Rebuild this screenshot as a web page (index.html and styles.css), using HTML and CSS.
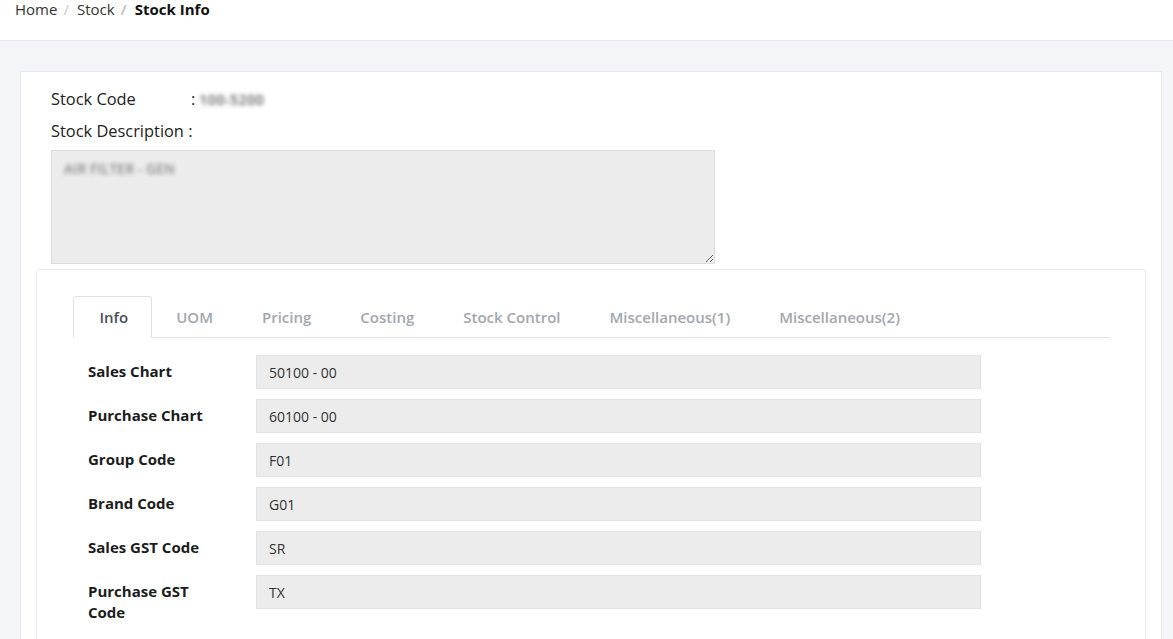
FILE: index.html
```html
<!DOCTYPE html>
<html lang="en">
<head>
    <meta charset="UTF-8">
    <meta name="viewport" content="width=device-width, initial-scale=1.0">
    <title>Stock Info</title>
    <link rel="stylesheet" href="styles.css">
</head>
<body>
<div class="top-bar">
    <ol class="breadcrumb">
        <li><a href="#">Home</a></li>
        <li><a href="#">Stock</a></li>
        <li class="active">Stock Info</li>
    </ol>
</div>

<div class="page">
    <div class="card">
        <div class="stock-head">
            <div class="head-row">
                <span class="head-label">Stock Code</span>
                <span class="head-colon">:</span>
                <span class="masked">100-5200</span>
            </div>
            <div class="head-row">
                <span>Stock Description :</span>
            </div>
            <textarea class="desc-box" readonly>AIR FILTER - GEN</textarea>
        </div>

        <div class="detail-panel">
            <ul class="tabs">
                <li class="tab active">Info</li>
                <li class="tab">UOM</li>
                <li class="tab">Pricing</li>
                <li class="tab">Costing</li>
                <li class="tab">Stock Control</li>
                <li class="tab">Miscellaneous(1)</li>
                <li class="tab">Miscellaneous(2)</li>
            </ul>

            <div class="info-form">
                <div class="form-row">
                    <label>Sales Chart</label>
                    <input type="text" value="50100 - 00" readonly>
                </div>
                <div class="form-row">
                    <label>Purchase Chart</label>
                    <input type="text" value="60100 - 00" readonly>
                </div>
                <div class="form-row">
                    <label>Group Code</label>
                    <input type="text" value="F01" readonly>
                </div>
                <div class="form-row">
                    <label>Brand Code</label>
                    <input type="text" value="G01" readonly>
                </div>
                <div class="form-row">
                    <label>Sales GST Code</label>
                    <input type="text" value="SR" readonly>
                </div>
                <div class="form-row">
                    <label>Purchase GST Code</label>
                    <input type="text" value="TX" readonly>
                </div>
            </div>
        </div>
    </div>
</div>
</body>
</html>
```

FILE: styles.css
```css
html, body {
    overflow: hidden;
}

body {
    font-family: "Open Sans", Arial, sans-serif;
    background-color: #f4f5f8;
    color: #212529;
    margin: 0;
    padding: 0;
}

/* Top bar */
.top-bar {
    background-color: #fff;
    height: 40px;
    border-bottom: 1px solid #e6e8ec;
}

.breadcrumb {
    list-style: none;
    margin: 0;
    padding: 0 15px;
    display: flex;
    font-size: 15px;
    line-height: 18px;
}

.breadcrumb li + li::before {
    content: "/";
    color: #c8c8c8;
    padding: 0 8px 0 6px;
}

.breadcrumb a {
    color: #333;
    text-decoration: none;
}

.breadcrumb .active {
    font-weight: bold;
    color: #111;
}

/* Page */
.page {
    padding: 30px 11px 0 20px;
}

.card {
    background: #fff;
    border: 1px solid #e6e8ec;
    padding: 15px 15px 0;
    min-height: 620px;
}

.stock-head {
    padding: 0 15px;
}

.head-row {
    display: flex;
    font-size: 16.4px;
    line-height: 24px;
    margin-bottom: 8px;
    color: #222;
}

.head-label {
    width: 140px;
}

.head-colon {
    width: 8px;
}

.masked {
    color: transparent;
    text-shadow: 0 0 4px #666;
    font-size: 15px;
    font-weight: 600;
}

.desc-box {
    display: block;
    width: 664px;
    height: 114px;
    box-sizing: border-box;
    margin: -1px 0 5px;
    padding: 8px 12px;
    background-color: #ececec;
    border: 1px solid #dcdcdc;
    border-radius: 0;
    font-family: "Open Sans", Arial, sans-serif;
    font-size: 14px;
    font-weight: 600;
    color: transparent;
    text-shadow: 0 0 4px #8a8a8a;
    outline: none;
}

/* Detail panel */
.detail-panel {
    border: 1px solid #e9ebee;
    border-radius: 3px;
    padding: 26px 35px 0 36px;
    min-height: 400px;
}

.tabs {
    list-style: none;
    margin: 0;
    padding: 0;
    display: flex;
    border-bottom: 1px solid #dee2e6;
}

.tab {
    padding: 10px 23.5px;
    font-size: 15px;
    line-height: 20px;
    font-weight: 600;
    color: #a2a6b0;
    border: 1px solid transparent;
    border-radius: 4px 4px 0 0;
    margin-bottom: -1px;
    cursor: pointer;
}

.tab:first-child {
    padding-left: 25.5px;
    padding-right: 22.5px;
}

.tab.active {
    color: #495057;
    background: #fff;
    border-color: #dee2e6 #dee2e6 #fff;
}

.info-form {
    padding: 17px 15px 0;
}

.form-row {
    display: flex;
    align-items: flex-start;
    margin-bottom: 10px;
}

.form-row label {
    width: 135px;
    margin-right: 33px;
    padding-top: 6px;
    font-size: 15px;
    line-height: 21px;
    font-weight: bold;
    color: #1c1c1c;
}

.form-row input {
    width: 725px;
    height: 34px;
    box-sizing: border-box;
    padding: 0 12px;
    background-color: #ececec;
    border: 1px solid #e2e2e2;
    font-family: "Open Sans", Arial, sans-serif;
    font-size: 14px;
    color: #333;
    outline: none;
}
```
